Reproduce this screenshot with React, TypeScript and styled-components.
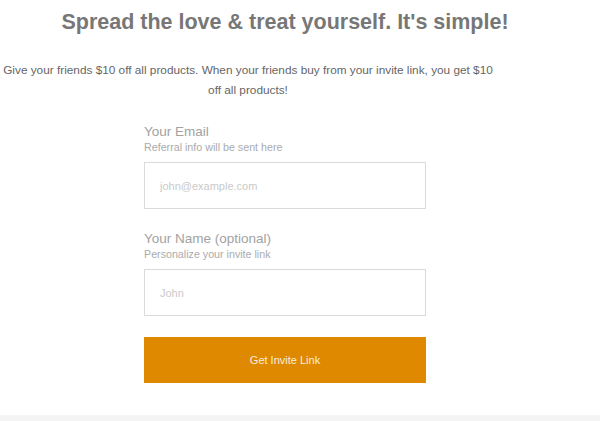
import React from 'react';
import styled, { createGlobalStyle } from 'styled-components';

const GlobalStyle = createGlobalStyle`
  html, body {
    margin: 0;
    padding: 0;
    background: #ffffff;
    font-family: 'Liberation Sans', Arial, sans-serif;
  }
`;

const Page = styled.div`
  width: 600px;
  height: 421px;
  display: flex;
  flex-direction: column;
  overflow: hidden;
`;

const Content = styled.div`
  flex: 1;
  width: 570px;
  display: flex;
  flex-direction: column;
  align-items: center;
`;

const Title = styled.h1`
  margin: 9px 0 0;
  font-size: 21.5px;
  line-height: 26px;
  font-weight: bold;
  color: #777777;
  text-align: center;
`;

const Intro = styled.p`
  align-self: flex-start;
  width: 496px;
  margin: 25px 0 0;
  font-size: 11.8px;
  line-height: 20px;
  color: #666666;
  text-align: center;
`;

const Form = styled.form`
  width: 282px;
  margin-top: 23px;
  display: flex;
  flex-direction: column;
`;

const Field = styled.div`
  display: flex;
  flex-direction: column;
  margin-bottom: 21px;
`;

const Label = styled.label`
  font-size: 13.5px;
  line-height: 17px;
  color: #a2a2a2;
`;

const Hint = styled.span`
  font-size: 10.7px;
  line-height: 14px;
  color: #ababab;
`;

const Input = styled.input`
  box-sizing: border-box;
  margin-top: 8px;
  width: 100%;
  height: 47px;
  padding: 0 15px;
  border: 1px solid #dadada;
  background: #ffffff;
  font-family: inherit;
  font-size: 11px;
  color: #555555;
  outline: none;

  &::placeholder {
    color: #cacaca;
  }
`;

const Button = styled.button`
  height: 46px;
  border: none;
  background: #df8900;
  color: #f8eedc;
  font-family: inherit;
  font-size: 11px;
  cursor: pointer;
`;

const Footer = styled.div`
  height: 6px;
  background: #f4f4f4;
`;

export default function App() {
  return (
    <>
      <GlobalStyle />
      <Page>
        <Content>
          <Title>Spread the love &amp; treat yourself. It's simple!</Title>
          <Intro>
            Give your friends $10 off all products. When your friends buy from your invite link, you get $10
            off all products!
          </Intro>
          <Form onSubmit={(e) => e.preventDefault()}>
            <Field>
              <Label>Your Email</Label>
              <Hint>Referral info will be sent here</Hint>
              <Input type="email" placeholder="john@example.com" />
            </Field>
            <Field>
              <Label>Your Name (optional)</Label>
              <Hint>Personalize your invite link</Hint>
              <Input type="text" placeholder="John" />
            </Field>
            <Button type="submit">Get Invite Link</Button>
          </Form>
        </Content>
        <Footer />
      </Page>
    </>
  );
}
